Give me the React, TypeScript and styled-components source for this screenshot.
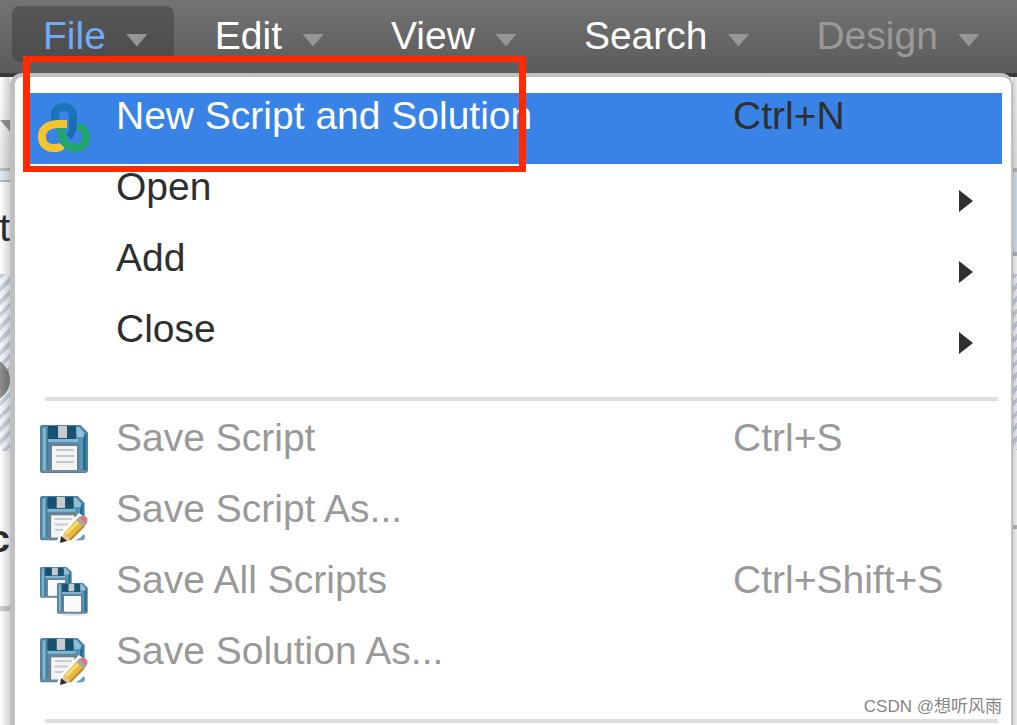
import React from "react";
import styled, { createGlobalStyle } from "styled-components";

const GlobalStyle = createGlobalStyle`
  * { box-sizing: border-box; }
  body {
    margin: 0;
    background: #fff;
    font-family: "Liberation Sans", Arial, sans-serif;
    overflow: hidden;
  }
`;

const Page = styled.div`
  position: relative;
  display: flex;
  flex-direction: column;
  height: 100vh;
  overflow: hidden;
`;

const MenuBar = styled.nav`
  display: flex;
  flex: none;
  gap: 10px;
  padding: 6px 12px 11px;
  background: linear-gradient(#737373, #5b5b5b);
  background-clip: padding-box;
  border-bottom: 4px solid #3a3a3a;
`;

const MenuButton = styled.button<{ $open?: boolean }>`
  display: flex;
  align-items: center;
  flex: none;
  gap: 20px;
  height: 56px;
  padding: 4px 26px 0 31px;
  border: 0;
  border-radius: 8px;
  background: ${(p) => (p.$open ? "linear-gradient(#575757, #4c4c4c)" : "transparent")};
  color: ${(p) => (p.$open ? "#6eabff" : "#fff")};
  font: 39px/44px "Liberation Sans", Arial, sans-serif;
  white-space: nowrap;

  &:disabled { color: #999; }
`;

const DownArrow = styled.span`
  flex: none;
  width: 22px;
  height: 13px;
  margin-top: 8px;
  background: #969696;
  clip-path: polygon(0 0, 100% 0, 50% 100%);
`;

const Workspace = styled.div`
  display: grid;
  grid-template-columns: 10px minmax(0, 1fr) 4px;
  flex: 1;
  min-height: 0;
`;

const Strip = styled.div<{ $shade: string }>`
  position: relative;
  display: flex;
  flex-direction: column;
  overflow: hidden;

  &::after {
    content: "";
    position: absolute;
    inset: 0;
    background: ${(p) => p.$shade};
  }
`;

const Band = styled.div<{ $h?: number; $fill?: string; $start?: boolean }>`
  display: flex;
  flex: ${(p) => (p.$h ? "none" : "1")};
  align-items: center;
  justify-content: ${(p) => (p.$start ? "flex-start" : "flex-end")};
  height: ${(p) => (p.$h ? `${p.$h}px` : "auto")};
  background: ${(p) => p.$fill ?? "transparent"};
  overflow: hidden;
`;

const ClippedText = styled.span<{ $bold?: boolean }>`
  flex: none;
  padding-top: ${(p) => (p.$bold ? "20px" : "0")};
  color: #2e2e2e;
  font-size: 39px;
  line-height: 44px;
  font-weight: ${(p) => (p.$bold ? 700 : 400)};
`;

const Knob = styled.span`
  flex: none;
  width: 44px;
  height: 44px;
  margin-top: 34px;
  border-radius: 50%;
  background: linear-gradient(90deg, #aaa, #858585);
`;

const hatch =
  "repeating-linear-gradient(135deg, #c9d3e4 0 4px, #f7f8fb 4px 9px)";

const Menu = styled.div`
  position: relative;
  margin-top: -4px;
  padding-top: 16px;
  border: solid #c0c0c0;
  border-width: 4px 2px 0 5px;
  border-radius: 12px 12px 0 0;
  background: #fff;
  overflow: hidden;
`;

const MenuItem = styled.button<{ $active?: boolean }>`
  display: grid;
  grid-template-columns: 87px minmax(0, 1fr) 269px;
  align-items: start;
  width: calc(100% - 23px);
  height: 71px;
  margin: 0 9px 0 14px;
  padding: 0;
  border: 0;
  background: ${(p) => (p.$active ? "#3a83e6" : "transparent")};
  color: #2f2f2f;
  font: 39px/46px "Liberation Sans", Arial, sans-serif;
  text-align: left;
  white-space: nowrap;

  &:disabled { color: #999; }
`;

const Label = styled.span<{ $active?: boolean }>`
  color: ${(p) => (p.$active ? "#fff" : "inherit")};
`;

const IconSlot = styled.span`
  display: block;
  height: 60px;
  padding: 10px 0 0 11px;

  svg { display: block; overflow: visible; }
`;

const RightArrow = styled.span`
  justify-self: end;
  width: 14px;
  height: 22px;
  margin: 26px 29px 0 0;
  background: #303030;
  clip-path: polygon(0 0, 100% 50%, 0 100%);
`;

const Divider = styled.hr`
  height: 4px;
  margin: 20px 13px 14px 30px;
  border: 0;
  background: #dfdfdf;
`;

const Highlight = styled.div`
  position: absolute;
  left: 23px;
  top: 56px;
  width: 503px;
  height: 116px;
  border: solid #ff2a00;
  border-width: 6px 7px;
  pointer-events: none;
`;

const Watermark = styled.span`
  position: absolute;
  right: 15px;
  bottom: 7px;
  color: #858585;
  font: 17px/22px "Liberation Sans", "Noto Sans CJK SC", sans-serif;
`;

function ScriptIcon() {
  return (
    <svg width="50" height="50" viewBox="1 1 50 50" fill="none" strokeWidth="8">
      <path d="M16 21V14C16 8 19 5 25 5C31 5 34 9 34 15V22" stroke="#1974b8" />
      <path d="M28 22H18C8 23 3 27 3 35C3 42 8 46 14 46C19 46 21 46 23 43" stroke="#f5c531" />
      <path d="M34 16V22C34 28 33 31 30 35" stroke="#196bad" strokeWidth="7" />
      <path d="M22 26C23 38 27 46 37 46C44 46 47 41 47 35C47 29 45 26 39 24" stroke="#23a570" />
      <path d="M34 20V25C34 29 33 31 31 34" stroke="#196bad" strokeWidth="6" />
    </svg>
  );
}

function Disk() {
  return (
    <>
      <path d="M2 1H40L47 8V45Q47 47 45 47H2Q1 47 1 45V2Z" fill="#5795b8" stroke="#4d83a0" strokeWidth="2" />
      <path d="M3 3H6V45H3Z" fill="#8cb2c7" />
      <path d="M6 3H9V45H6Z" fill="#3f83a8" />
      <path d="M43 9H46V45H43Z" fill="#286c91" />
      <path d="M8 1H36V14H8Z" fill="#17516f" />
      <path d="M18 1H27V13H18Z" fill="#c9cbcb" />
      <path d="M36 2H39L44 8V12H37Z" fill="#91bfd4" />
      <path d="M8 14H38V17H8Z" fill="#82b8d4" />
      <path d="M9 18H39V46H9Z" fill="#68808f" />
      <path d="M12 21H37V46H12Z" fill="#f2f4f5" />
      <path d="M16 25H34M16 31H34M16 37H34" stroke="#c8cbcc" strokeWidth="2" />
      <path d="M2 46H46" stroke="#718b99" strokeWidth="2" />
    </>
  );
}

function SaveIcon() {
  return (
    <svg width="48" height="48" viewBox="0 0 48 48"><Disk /></svg>
  );
}

function SaveAsIcon() {
  return (
    <svg width="48" height="48" viewBox="0 0 48 48">
      <g transform="scale(.93 .92)"><Disk /></g>
      <path d="M16 46L22 35L39 17L48 24V36L42 41L30 47Z" fill="#fff" />
      <path d="M38 44L44 38V44Z" fill="#6b9cb8" />
      <path d="M21 46L24 37L37 23L44 30L30 44Z" fill="#e5b840" />
      <path d="M26 38L39 25" stroke="#f8dc6d" strokeWidth="3" />
      <path d="M30 44L44 30" stroke="#b98a30" strokeWidth="2" />
      <path d="M36 24L40 20L47 27L44 31Z" fill="#a8a6a0" />
      <path d="M40 21Q43 18 46 21Q49 24 46 28Z" fill="#dd777b" />
      <path d="M21 46L24 37L30 43Z" fill="#e8c498" />
      <path d="M20 47L21 40L27 45Z" fill="#292b2d" />
    </svg>
  );
}

function SaveAllIcon() {
  return (
    <svg width="48" height="50" viewBox="0 0 48 50">
      <g transform="scale(.66 .64)"><Disk /></g>
      <path d="M8 13H25V28H8Z" fill="#f8f9f9" />
      <ellipse cx="33" cy="48" rx="13" ry="1" fill="#e3e3e3" />
      <g transform="translate(17 16) scale(.64)"><Disk /></g>
      <path d="M24 29H41V44H24Z" fill="#f8f9f9" />
    </svg>
  );
}

const menus = [
  { name: "File", open: true },
  { name: "Edit" },
  { name: "View" },
  { name: "Search" },
  { name: "Design", disabled: true },
];

type Entry = {
  label: string;
  icon?: React.ReactNode;
  shortcut?: string;
  submenu?: boolean;
  active?: boolean;
  disabled?: boolean;
};

const createItems: Entry[] = [
  { label: "New Script and Solution", icon: <ScriptIcon />, shortcut: "Ctrl+N", active: true },
  { label: "Open", submenu: true },
  { label: "Add", submenu: true },
  { label: "Close", submenu: true },
];

const saveItems: Entry[] = [
  { label: "Save Script", icon: <SaveIcon />, shortcut: "Ctrl+S", disabled: true },
  { label: "Save Script As...", icon: <SaveAsIcon />, disabled: true },
  { label: "Save All Scripts", icon: <SaveAllIcon />, shortcut: "Ctrl+Shift+S", disabled: true },
  { label: "Save Solution As...", icon: <SaveAsIcon />, disabled: true },
];

function Item({ label, icon, shortcut, submenu, active, disabled }: Entry) {
  return (
    <MenuItem role="menuitem" $active={active} disabled={disabled} aria-haspopup={submenu}>
      <IconSlot>{icon}</IconSlot>
      <Label $active={active}>{label}</Label>
      {submenu ? <RightArrow /> : <span>{shortcut}</span>}
    </MenuItem>
  );
}

export default function App() {
  return (
    <Page>
      <GlobalStyle />
      <MenuBar>
        {menus.map((m) => (
          <MenuButton key={m.name} $open={m.open} disabled={m.disabled}>
            {m.name}
            <DownArrow />
          </MenuButton>
        ))}
      </MenuBar>
      <Workspace>
        <Strip $shade="linear-gradient(90deg, transparent, rgba(0,0,0,.17))">
          <Band $h={91} $fill="linear-gradient(#fff, #e8e8e8)" $start>
            <DownArrow />
          </Band>
          <Band $h={3} $fill="#bdbdbd" />
          <Band $h={9} $fill="#e4edf7" />
          <Band $h={2} $fill="#b4bfce" />
          <Band $h={92} $fill="#fff">
            <ClippedText>rt</ClippedText>
          </Band>
          <Band $h={177} $fill={hatch}>
            <Knob />
          </Band>
          <Band $h={155} $fill="#fff">
            <ClippedText $bold>c</ClippedText>
          </Band>
          <Band $h={5} $fill="#cfcfcf" />
          <Band $fill="#fff" />
        </Strip>
        <Menu role="menu">
          {createItems.map((item) => <Item key={item.label} {...item} />)}
          <Divider />
          {saveItems.map((item) => <Item key={item.label} {...item} />)}
          <Divider />
        </Menu>
        <Strip $shade="linear-gradient(90deg, rgba(0,0,0,.18), rgba(0,0,0,.08))">
          <Band $h={91} $fill="linear-gradient(#fff, #eee)" />
          <Band $h={4} $fill="#bdbdbd" />
          <Band $h={80} $fill="#dce8f6" />
          <Band $h={4} $fill="#b8b8b8" />
          <Band $h={18} $fill="#fff" />
          <Band $h={176} $fill={hatch} />
          <Band $h={75} $fill="#fff" />
          <Band $h={4} $fill="#bdbdbd" />
          <Band $fill="#fff" />
        </Strip>
      </Workspace>
      <Highlight />
      <Watermark>CSDN @想听风雨</Watermark>
    </Page>
  );
}
